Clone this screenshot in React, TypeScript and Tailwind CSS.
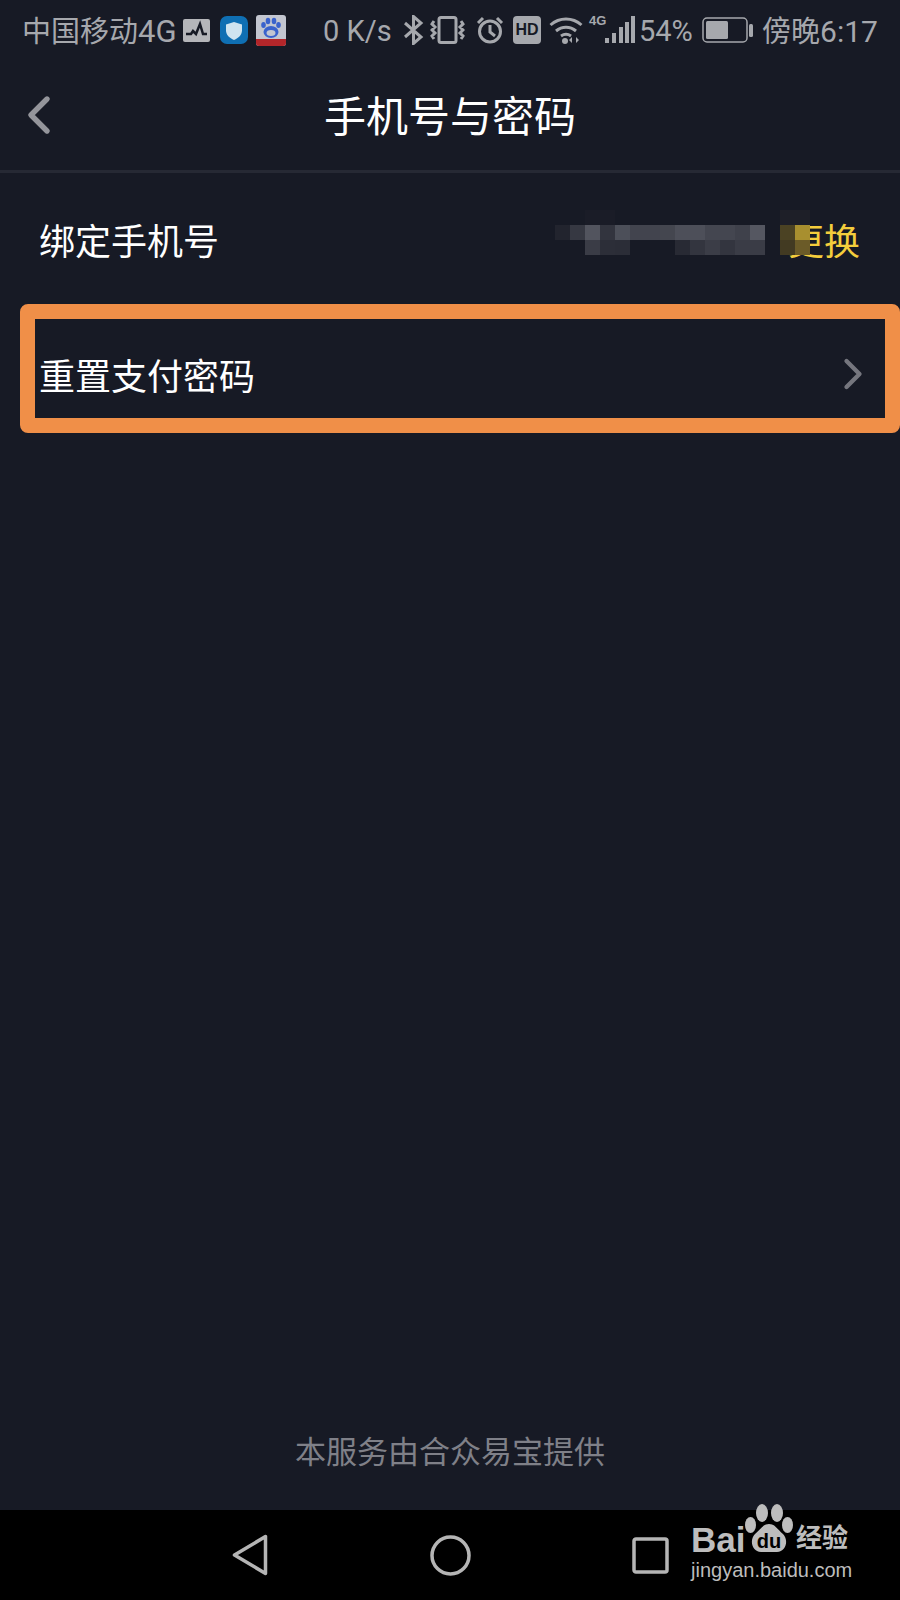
import { ChevronLeft, ChevronRight } from "lucide-react";

// mosaic over the phone number, 15px cells, "" leaves the page colour
const mosaic = [
	["", "", "#1a1c27", "#1a1c27", "", "", "", "", "", "", "", "", "", "", "", "#1e1f28", "#1e1f28"],
	["#22242e", "#363842", "#52545e", "#32343e", "#4c4f59", "#42444e", "#42444e", "#44464f", "#4d4f59", "#4d4f59", "#444650", "#444650", "#3f414b", "#555761", "", "#4b4223", "#a88f2f"],
	["", "", "#3a3c46", "#2c2e38", "#2b2d37", "", "", "", "#282a34", "#33353f", "#3b3d47", "#33353f", "#3a3c46", "#3a3c46", "", "#423a22", "#6b5b28"],
];

function StatusBar() {
	return (
		<div className="flex h-[60px] items-center whitespace-nowrap pl-[22px] font-['Roboto','Noto_Sans_CJK_SC',sans-serif] text-[29px] text-[#a6a8ad]">
			<span className="mt-[4px] w-[153px]">
				中国移动<span className="text-[31px]">4G</span>
			</span>
			<svg width="27" height="23" viewBox="0 0 27 23" className="ml-[8px]">
				<rect width="27" height="23" rx="2" fill="#b5b6ba" />
				<path d="M3 15h5l2-3 3 3 4-10 3 10h4" fill="none" stroke="#171a25" strokeWidth="2.500" />
			</svg>
			<svg width="28" height="28" viewBox="0 0 28 28" className="ml-[10px]">
				<rect width="28" height="28" rx="7" fill="#0f6fb3" />
				<path d="M14 6l8 2.500v6c0 4.500-3.500 7.500-8 9.500-4.500-2-8-5-8-9.500v-6z" fill="#cfe4f0" />
			</svg>
			<svg width="30" height="31" viewBox="0 0 30 31" className="ml-[8px]">
				<rect width="30" height="31" rx="3" fill="#c3c6d0" />
				<path d="M0 24h30v4a3 3 0 0 1-3 3H3a3 3 0 0 1-3-3z" fill="#b3262a" />
				<ellipse cx="15" cy="17" rx="7.500" ry="6" fill="#3a62cc" />
				<ellipse cx="7.500" cy="10" rx="2.300" ry="3" fill="#3a62cc" />
				<ellipse cx="12" cy="6" rx="2.300" ry="3.200" fill="#3a62cc" />
				<ellipse cx="18" cy="6" rx="2.300" ry="3.200" fill="#3a62cc" />
				<ellipse cx="22.500" cy="10" rx="2.300" ry="3" fill="#3a62cc" />
				<ellipse cx="15" cy="18" rx="4.500" ry="3" fill="#c3c6d0" />
			</svg>
			<span className="ml-[37px] mt-[4px] w-[70px]">0 K/s</span>
			<svg width="21" height="30" viewBox="0 0 21 30" className="ml-[10px]" fill="none" stroke="#a6a8ad" strokeWidth="3">
				<path d="M2 8l16 14-7.500 6.500V1.500L18 8 2 22" />
			</svg>
			<svg width="35" height="28" viewBox="0 0 35 28" className="ml-[6px]" fill="none" stroke="#a6a8ad" strokeWidth="3">
				<rect x="9" y="1.500" width="17" height="25" rx="2" />
				<path d="M4 5l-2 3 3 3-3 3 3 3-3 3 2 3M31 5l2 3-3 3 3 3-3 3 3 3-2 3" />
			</svg>
			<svg width="28" height="28" viewBox="0 0 28 28" className="ml-[11px]" fill="none" stroke="#a6a8ad" strokeWidth="3">
				<circle cx="14" cy="15.500" r="10.500" />
				<path d="M14 9v7l5 4M2 7l5-5M26 7l-5-5" />
			</svg>
			<div className="ml-[9px] flex h-[28px] w-[28px] items-center justify-center rounded-[4px] bg-[#a6a8ad] font-['Liberation_Sans',sans-serif] text-[16px] font-bold text-[#171a25]">
				HD
			</div>
			<svg width="34" height="28" viewBox="0 0 34 28" className="ml-[8px]" fill="none" stroke="#a6a8ad" strokeWidth="3">
				<path d="M1.500 9c9-8 22-8 31 0M7 15c6-5 14-5 20 0M12 20c3-2 7-2 10 0" />
				<circle cx="16" cy="25" r="3" fill="#a6a8ad" stroke="none" />
				<path d="M23 21v6l-3-3zM27 21v6l3-3z" fill="#a6a8ad" stroke="none" />
			</svg>
			<div className="relative ml-[6px] h-[28px] w-[46px]">
				<span className="absolute left-0 top-[-5px] font-['Liberation_Sans',sans-serif] text-[13px] font-bold">4G</span>
				<svg width="30" height="28" viewBox="0 0 30 28" className="absolute right-0 top-0" fill="#a6a8ad">
					<rect x="0" y="22" width="4" height="5" />
					<rect x="7" y="17" width="4" height="10" />
					<rect x="14" y="11" width="4" height="16" />
					<rect x="20" y="6" width="4" height="21" />
					<rect x="26" y="0" width="4" height="27" />
				</svg>
			</div>
			<span className="ml-[4px] mt-[4px] w-[57px]">54%</span>
			<svg width="52" height="26" viewBox="0 0 52 26" className="ml-[6px]">
				<rect x="1" y="1" width="44" height="24" rx="4" fill="none" stroke="#a6a8ad" strokeWidth="1.500" />
				<rect x="4" y="4" width="22" height="18" rx="1.500" fill="#a6a8ad" />
				<rect x="47" y="7" width="4" height="13" rx="1.500" fill="#a6a8ad" />
			</svg>
			<span className="ml-[8px] mt-[4px]">
				傍晚<span className="text-[30px]">6:17</span>
			</span>
		</div>
	);
}

function BaiduMark() {
	return (
		<div className="absolute left-[691px] top-[-6px] h-[76px] w-[162px] text-[#bdbdbd]">
			<span className="absolute left-0 top-[21px] font-['Liberation_Sans',sans-serif] text-[35px] font-bold leading-[30px]">Bai</span>
			<svg width="50" height="50" viewBox="0 0 50 50" className="absolute left-[54px] top-0">
				<ellipse cx="17" cy="9" rx="6" ry="9" fill="#bdbdbd" />
				<ellipse cx="32" cy="9" rx="6" ry="9" fill="#bdbdbd" />
				<ellipse cx="5.500" cy="21" rx="5.500" ry="8" fill="#bdbdbd" />
				<ellipse cx="42.500" cy="21" rx="5.500" ry="8" fill="#bdbdbd" />
				<path d="M24 20c6 0 8 5 14 10 6 6 3 18-6 18H16C7 48 4 36 10 30c6-5 8-10 14-10z" fill="#bdbdbd" />
				<text x="24" y="44" textAnchor="middle" fontSize="20" fontWeight="700" fontFamily="Liberation Sans" fill="#000">du</text>
			</svg>
			<span className="absolute left-[105px] top-[13px] font-['Noto_Sans_CJK_SC',sans-serif] text-[26px] font-bold leading-[38px]">经验</span>
			<span className="absolute left-0 top-[54px] font-['Liberation_Sans',sans-serif] text-[20px] leading-[24px]">jingyan.baidu.com</span>
		</div>
	);
}

function App() {
	return (
		<div className="flex h-[1600px] w-[900px] flex-col bg-[#171a25] font-['Noto_Sans_CJK_SC','Liberation_Sans',sans-serif]">
			<StatusBar />
			<div className="relative flex h-[113px] items-center justify-center border-b-[3px] border-[#262934] pb-1">
				<ChevronLeft className="absolute left-[7px] top-[23px] h-[64px] w-[64px] text-[#94959b]" strokeWidth={2} />
				<h1 className="text-[42px] text-white">手机号与密码</h1>
			</div>
			<div className="relative flex h-[131px] items-center justify-between pl-[39px] pr-[40px] text-[36px] text-white">
				<span>绑定手机号</span>
				<span className="text-[#f4cd3c]">更换</span>
				<div className="absolute left-[555px] top-[37px] grid grid-cols-[repeat(17,15px)] auto-rows-[15px]">
					{mosaic.flat().map((color, i) => (
						<div key={i} style={color ? { backgroundColor: color } : undefined} />
					))}
				</div>
			</div>
			<div className="ml-[20px] flex h-[129px] items-center justify-between rounded-[8px] border-[15px] border-[#f08f48] pl-[4px] pr-[6px] pt-[10px] text-[36px] text-white">
				<span>重置支付密码</span>
				<ChevronRight className="h-[52px] w-[52px] text-[#75767e]" strokeWidth={2} />
			</div>
			<div className="flex-1" />
			<p className="pb-[37px] text-center text-[31px] text-[#7f8088]">本服务由合众易宝提供</p>
			<div className="relative flex h-[90px] items-center bg-black pl-[232px]">
				<svg width="36" height="42" viewBox="0 0 36 42" fill="none" stroke="#b5b5b5" strokeWidth="3.500" strokeLinejoin="round">
					<path d="M33.500 2.500v37L2.500 21z" />
				</svg>
				<svg width="41" height="41" viewBox="0 0 41 41" className="ml-[162px]" fill="none" stroke="#b5b5b5" strokeWidth="3.500">
					<circle cx="20.500" cy="20.500" r="18.500" />
				</svg>
				<svg width="37" height="37" viewBox="0 0 37 37" className="ml-[161px]" fill="none" stroke="#b5b5b5" strokeWidth="3.500">
					<rect x="2" y="2" width="33" height="33" rx="2" />
				</svg>
				<BaiduMark />
			</div>
		</div>
	);
}

export default App;
